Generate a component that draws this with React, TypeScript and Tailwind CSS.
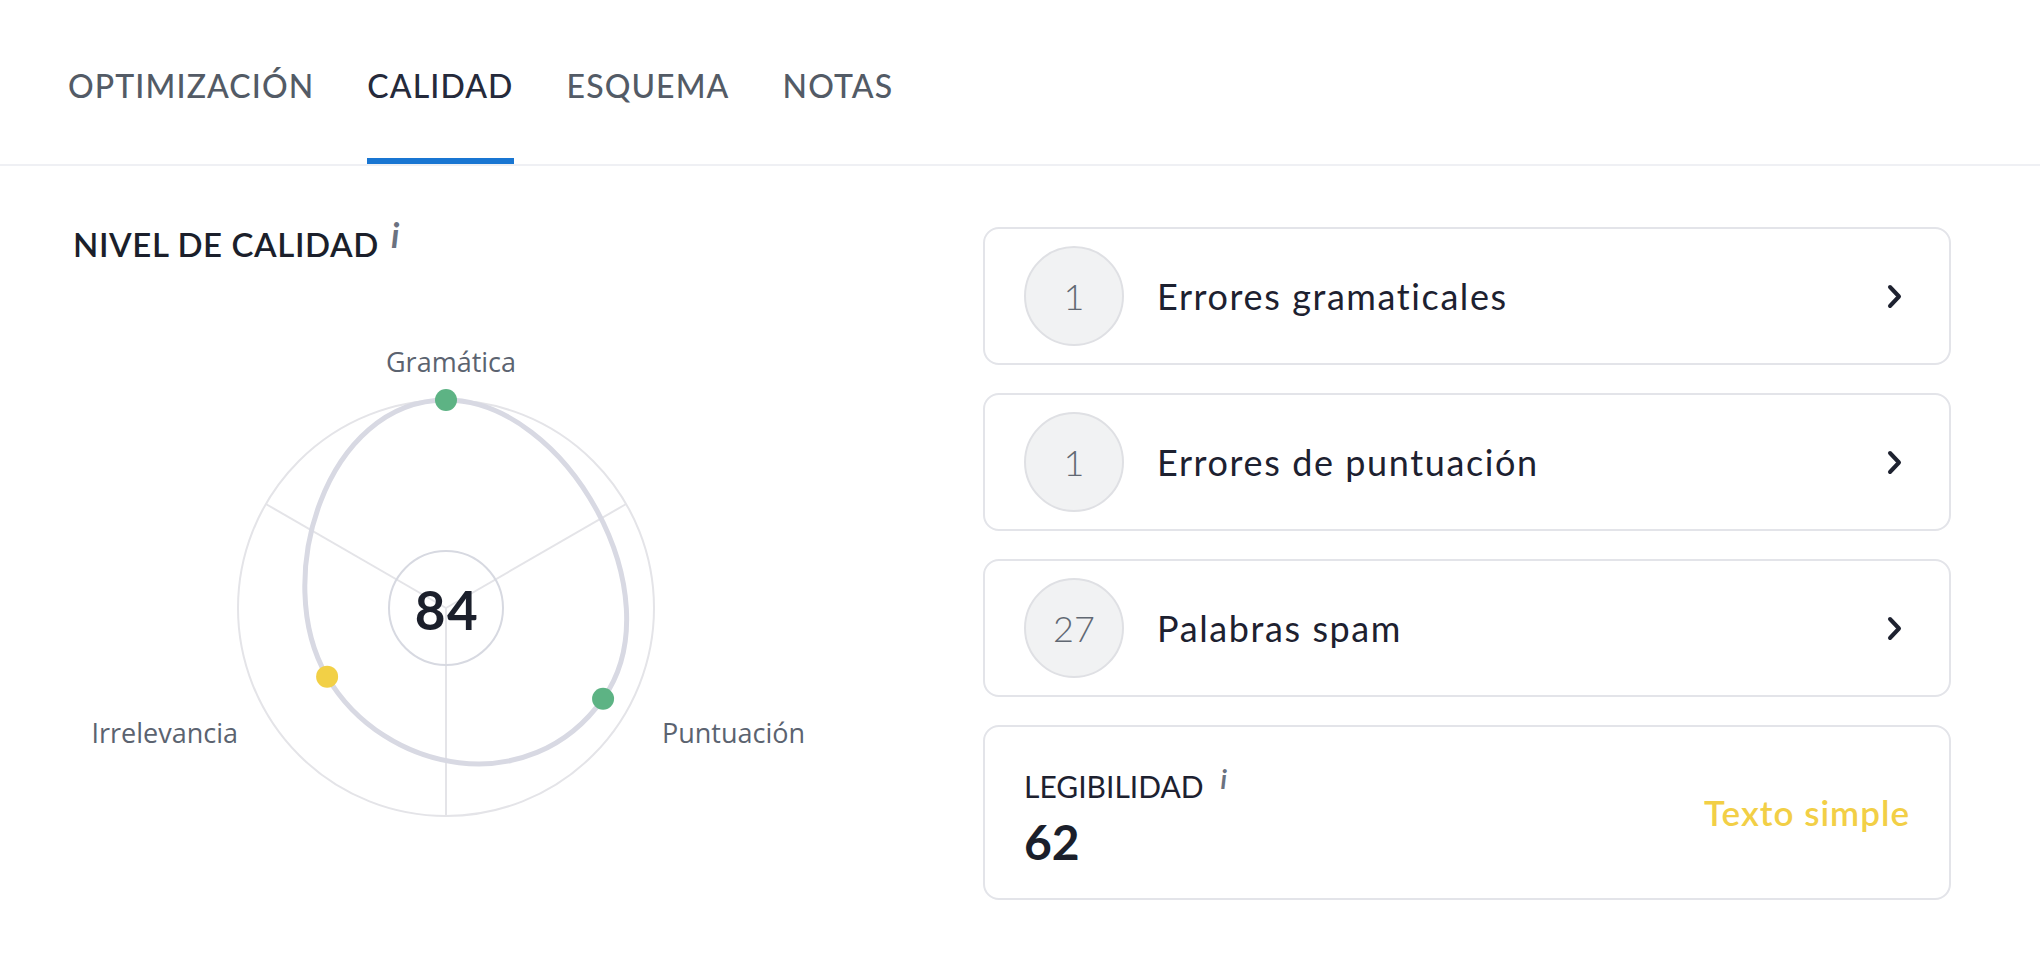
import React from "react";

const TABS = ["OPTIMIZACIÓN", "CALIDAD", "ESQUEMA", "NOTAS"];

const ISSUES = [
  { count: 1, label: "Errores gramaticales" },
  { count: 1, label: "Errores de puntuación" },
  { count: 27, label: "Palabras spam" },
];

// radar geometry (svg coords)
const CX = 373;
const CY = 344;
const R = 208;

const AXES = [
  { name: "Gramática", dir: [0, -1], value: 1, color: "#5db384", tangent: [360, 0] },
  { name: "Puntuación", dir: [0.866, 0.5], value: 0.872, color: "#5db384", tangent: [-220, 310] },
  { name: "Irrelevancia", dir: [-0.866, 0.5], value: 0.66, color: "#f2d046", tangent: [-170, -290] },
];

// closed hermite curve through the points, tangents per point
function curvePath(pts: number[][], tans: number[][]) {
  const n = pts.length;
  let d = `M${pts[0][0]} ${pts[0][1]}`;
  for (let i = 0; i < n; i++) {
    const a = pts[i];
    const b = pts[(i + 1) % n];
    const ta = tans[i];
    const tb = tans[(i + 1) % n];
    d += ` C${a[0] + ta[0] / 3} ${a[1] + ta[1] / 3} ${b[0] - tb[0] / 3} ${b[1] - tb[1] / 3} ${b[0]} ${b[1]}`;
  }
  return d + "Z";
}

function InfoMark({ className }: { className: string }) {
  return (
    <span className={`font-['Lato',sans-serif] italic font-bold text-[#6b7280] leading-none ${className}`}>
      i
    </span>
  );
}

function Chevron() {
  return (
    <svg width="16" height="25" viewBox="0 0 16 25" fill="none">
      <path d="M3 3 L12 12.5 L3 22" stroke="#1e2230" strokeWidth="4" strokeLinecap="round" strokeLinejoin="round" />
    </svg>
  );
}

function Radar() {
  const pts = AXES.map(a => [CX + a.dir[0] * R * a.value, CY + a.dir[1] * R * a.value]);
  const spokes = [
    [0.866, -0.5],
    [-0.866, -0.5],
    [0, 1],
  ];

  return (
    <svg width="910" height="600" viewBox="0 0 910 600" className="block">
      <circle cx={CX} cy={CY} r={R} fill="none" stroke="#e4e4e8" strokeWidth="2" />
      {spokes.map((s, i) => (
        <line key={i} x1={CX} y1={CY} x2={CX + s[0] * R} y2={CY + s[1] * R} stroke="#e4e4e8" strokeWidth="2" />
      ))}
      <circle cx={CX} cy={CY} r={57} fill="none" stroke="#d7d9e1" strokeWidth="2" />
      <path d={curvePath(pts, AXES.map(a => a.tangent))} fill="none" stroke="#d8d9e3" strokeWidth="5" />
      {pts.map((p, i) => (
        <circle key={i} cx={p[0]} cy={p[1]} r={11} fill={AXES[i].color} />
      ))}
      <text x={CX + 1} y={CY + 22} textAnchor="middle" fontSize="53" fontWeight="700" letterSpacing="1.5" fill="#1b1f2b" fontFamily="Lato, sans-serif">
        84
      </text>
      <text x={378} y={108} textAnchor="middle" fontSize="27" fill="#5b6370" fontFamily="'Open Sans', sans-serif">
        Gramática
      </text>
      <text x={165} y={479} textAnchor="end" fontSize="27" fill="#5b6370" fontFamily="'Open Sans', sans-serif">
        Irrelevancia
      </text>
      <text x={589} y={479} textAnchor="start" fontSize="27" fill="#5b6370" fontFamily="'Open Sans', sans-serif">
        Puntuación
      </text>
    </svg>
  );
}

export default function App() {
  return (
    <div className="w-full min-h-screen bg-white font-['Lato',sans-serif]">
      {/* Tabs */}
      <div className="flex gap-[53px] pl-[68px] border-b-2 border-[#eff0f4]">
        {TABS.map(t => (
          <div
            key={t}
            className={`pt-[66px] pb-[52px] text-[32px] leading-[40px] font-medium tracking-[1.1px] border-b-[6px] ${
              t === "CALIDAD" ? "text-[#252a3b] border-[#1976d2]" : "text-[#535b66] border-transparent"
            }`}
          >
            {t}
          </div>
        ))}
      </div>

      {/* Content */}
      <div className="flex pl-[73px] pt-[58px]">
        <div className="w-[910px] flex flex-col">
          <div className="flex items-start gap-[12px]">
            <h2 className="text-[33px] leading-[40px] font-semibold tracking-[0.6px] text-[#1b1f2b]">NIVEL DE CALIDAD</h2>
            <InfoMark className="text-[34px] -mt-[6px]" />
          </div>
          <Radar />
        </div>

        <div className="w-[968px] flex flex-col gap-[28px] pt-[3px]">
          {ISSUES.map(item => (
            <div
              key={item.label}
              className="h-[138px] flex items-center pl-[39px] pr-[46px] border-2 border-[#e3e4e9] rounded-[16px]"
            >
              <div className="w-[100px] h-[100px] shrink-0 rounded-full bg-[#f1f2f3] border-2 border-[#dfe0e4] flex items-center justify-center text-[36px] font-light text-[#616872]">
                {item.count}
              </div>
              <div className="flex-1 ml-[33px] text-[36px] tracking-[1.6px] text-[#1d2130]">{item.label}</div>
              <Chevron />
            </div>
          ))}

          <div className="h-[175px] flex items-center justify-between pl-[39px] pr-[39px] border-2 border-[#e3e4e9] rounded-[16px]">
            <div className="flex flex-col pt-[10px]">
              <div className="flex items-start gap-[17px]">
                <span className="text-[30px] leading-[36px] text-[#1d2130]">LEGIBILIDAD</span>
                <InfoMark className="text-[26px] -mt-[2px]" />
              </div>
              <div className="mt-[12px] text-[48px] leading-[52px] font-bold text-[#1b1f2b]">62</div>
            </div>
            <div className="text-[35px] font-semibold tracking-[1px] text-[#f2cf46]">Texto simple</div>
          </div>
        </div>
      </div>
    </div>
  );
}
